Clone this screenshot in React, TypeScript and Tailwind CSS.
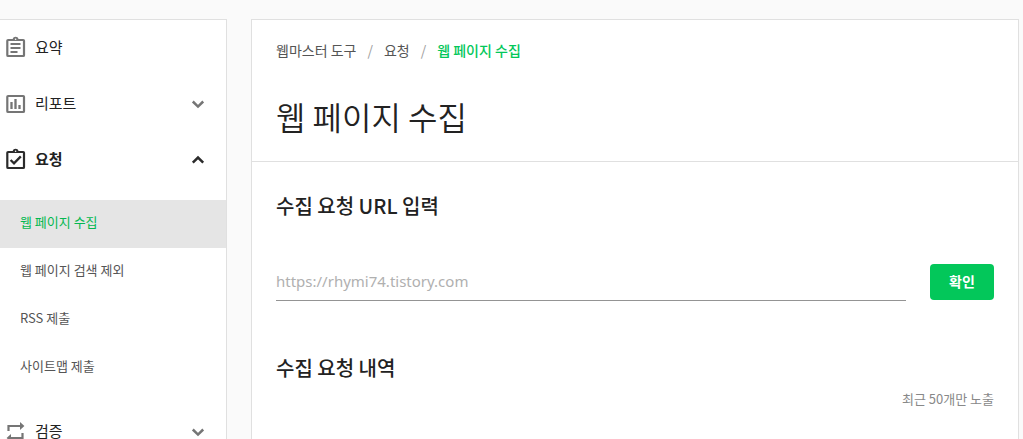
import React, { useState } from "react";
import clsx from "clsx";

type IconName = "summary" | "report" | "request" | "verify";

type MenuItem = {
  label: string;
  icon: IconName;
  children?: string[];
};

const menuItems: MenuItem[] = [
  { label: "요약", icon: "summary" },
  { label: "리포트", icon: "report", children: [] },
  {
    label: "요청",
    icon: "request",
    children: ["웹 페이지 수집", "웹 페이지 검색 제외", "RSS 제출", "사이트맵 제출"],
  },
  { label: "검증", icon: "verify", children: [] },
];

const currentPage = "웹 페이지 수집";

const MenuIcon: React.FC<{ name: IconName }> = ({ name }) => (
  <svg
    viewBox="0 0 24 24"
    className="size-6 shrink-0"
    fill="none"
    stroke="currentColor"
    strokeWidth="2"
    aria-hidden="true"
  >
    {name !== "verify" && <rect x="3.3" y="4" width="16.7" height="16" rx="0.8" strokeWidth="2.2" />}
    {(name === "summary" || name === "request") && (
      <>
        <path d="M8.6 3a3.1 3.1 0 0 1 6 0z" fill="currentColor" stroke="none" />
        <circle cx="11.6" cy="3.2" r="0.8" fill="#fff" stroke="none" />
      </>
    )}
    {name === "summary" && <path d="M6.5 8h10M6.5 12h10M6.5 16h7" />}
    {name === "report" && <path d="M7.5 10v7M11.5 7v10M15.5 13v4" strokeWidth="2.3" />}
    {name === "request" && <path d="m6.6 12 3.4 3.4 6.8-7" strokeWidth="2.3" />}
    {name === "verify" && (
      <>
        <path d="M4.5 11V6H17M18.5 13v5H6" strokeWidth="2.2" />
        <path d="M16 2v8l4.4-4zM7 14v8l-4.4-4z" fill="currentColor" stroke="none" />
      </>
    )}
  </svg>
);

const Chevron: React.FC<{ up: boolean }> = ({ up }) => (
  <svg
    viewBox="0 0 24 24"
    className="size-6 shrink-0"
    fill="none"
    stroke="currentColor"
    strokeWidth="2.5"
    aria-hidden="true"
  >
    <path d={up ? "m6.8 14.6 5.2-5.1 5.2 5.1" : "m6.8 9.5 5.2 5.1 5.2-5.1"} />
  </svg>
);

const Sidebar: React.FC = () => {
  const [opened, setOpened] = useState("요청");

  return (
    <nav className="w-[227px] shrink-0 border-t border-r border-[#e0e0e0] bg-white">
      {menuItems.map(({ label, icon, children }) => {
        const isOpen = opened === label;
        return (
          <div key={label}>
            <button
              type="button"
              onClick={() => setOpened(isOpen ? "" : label)}
              className={clsx(
                "flex h-14 w-full items-center pr-4 pl-1 text-left text-[15px] leading-5",
                isOpen ? "font-bold text-[#2b2b2b]" : "text-[#757575]"
              )}
            >
              <MenuIcon name={icon} />
              <span className="ml-[7px] flex-1 pb-0.5 text-[#222]">{label}</span>
              {children && <Chevron up={isOpen} />}
            </button>
            {isOpen && children && (
              <ul className="py-3">
                {children.map((child) => (
                  <li key={child}>
                    <a
                      href="#"
                      className={clsx(
                        "flex h-12 items-center pb-1 pl-5 text-[13px]",
                        child === currentPage ? "bg-[#e5e5e5] text-[#03b850]" : "text-[#555]"
                      )}
                    >
                      {child}
                    </a>
                  </li>
                ))}
              </ul>
            )}
          </div>
        );
      })}
    </nav>
  );
};

const Breadcrumb: React.FC = () => (
  <nav className="flex gap-[11px] text-sm leading-5 text-[#555]">
    <a href="#">웹마스터 도구</a>
    <span className="text-[#9e9e9e]">/</span>
    <a href="#">요청</a>
    <span className="text-[#9e9e9e]">/</span>
    <span className="font-medium text-[#03c75a]">{currentPage}</span>
  </nav>
);

const App: React.FC = () => {
  const [url, setUrl] = useState("");

  const handleSubmit = (e: React.FormEvent) => {
    e.preventDefault();
  };

  return (
    <div className="flex min-h-screen gap-6 bg-[#fafafa] pt-[19px] pr-1 font-['Noto_Sans_CJK_KR',sans-serif] text-[#222]">
      <Sidebar />

      <main className="min-w-0 flex-1 border border-b-0 border-[#e0e0e0] bg-white">
        <header className="border-b border-[#e0e0e0] px-6 pt-5 pb-[21px]">
          <Breadcrumb />
          <h1 className="mt-8 text-[32px] leading-12 font-[350]">웹 페이지 수집</h1>
        </header>

        <section className="px-6 pt-7">
          <h2 className="text-xl leading-8 font-medium">
            <label htmlFor="url">수집 요청 URL 입력</label>
          </h2>
          <form onSubmit={handleSubmit} className="mt-[39px] flex items-end gap-6">
            <input
              id="url"
              type="text"
              value={url}
              onChange={(e) => setUrl(e.target.value)}
              placeholder="https://rhymi74.tistory.com"
              className="h-10 min-w-0 flex-1 border-b border-[#949494] font-['Noto_Sans',sans-serif] text-[15px] outline-none placeholder:text-[#b0b0b0]"
            />
            <button
              type="submit"
              className="mb-px h-9 w-16 rounded bg-[#03c75a] pb-0.5 text-sm font-bold text-white"
            >
              확인
            </button>
          </form>
        </section>

        <section className="px-6 pt-[51px]">
          <h2 className="text-xl leading-8 font-medium">수집 요청 내역</h2>
          <p className="mt-1 text-right text-[13px] leading-[22px] text-[#888]">최근 50개만 노출</p>
        </section>
      </main>
    </div>
  );
};

export default App;
